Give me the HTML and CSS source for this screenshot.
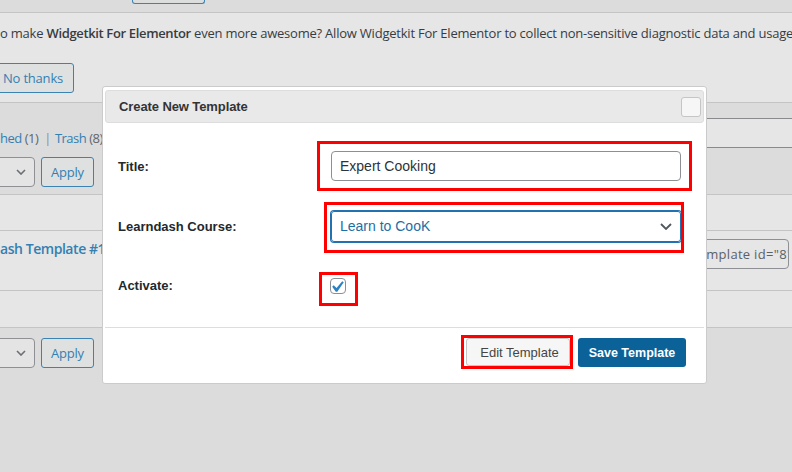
FILE: index.html
```html
<!DOCTYPE html>
<html lang="en">
<head>
<meta charset="utf-8">
<title>Create New Template</title>
<link rel="stylesheet" href="styles.css">
</head>
<body>
<div class="page">
  <div class="topbar"><span class="add-new"></span></div>
  <div class="notice">
    <p class="notice-text">o make <strong>Widgetkit For Elementor</strong> even more awesome? Allow Widgetkit For Elementor to collect non-sensitive diagnostic data and usage information.</p>
    <div class="notice-actions"><span class="btn-sec btn-nothanks">No thanks</span></div>
  </div>
  <div class="filters">
    <div class="subsub"><a class="link">hed</a> <span class="count">(1)</span><span class="sep">|</span><a class="link">Trash</a> <span class="count">(8)</span></div>
    <div class="search-box"></div>
  </div>
  <div class="tablenav">
    <div class="bulk-select">
      <svg class="chev-sm" width="10" height="6" viewBox="0 0 10 6"><polyline points="1,1 5,5 9,1" fill="none" stroke="#6b6f73" stroke-width="1.6"/></svg>
    </div>
    <span class="btn-sec">Apply</span>
  </div>
  <div class="list-table">
    <div class="row row-head"></div>
    <div class="row row-item">
      <a class="row-title">ash Template #1</a>
      <div class="shortcode">[learndash_template id="8"]</div>
    </div>
    <div class="row row-foot"></div>
  </div>
  <div class="tablenav tablenav-bottom">
    <div class="bulk-select">
      <svg class="chev-sm" width="10" height="6" viewBox="0 0 10 6"><polyline points="1,1 5,5 9,1" fill="none" stroke="#6b6f73" stroke-width="1.6"/></svg>
    </div>
    <span class="btn-sec">Apply</span>
  </div>
</div>

<div class="dialog">
  <div class="dialog-title">
    <span class="dialog-title-text">Create New Template</span>
    <span class="dialog-close"></span>
  </div>
  <div class="dialog-body">
    <div class="form-row">
      <label class="form-label">Title:</label>
      <div class="field"><div class="text-input">Expert Cooking</div></div>
    </div>
    <div class="form-row">
      <label class="form-label">Learndash Course:</label>
      <div class="field">
        <div class="select-input">
          <span>Learn to CooK</span>
          <svg width="12" height="7" viewBox="0 0 12 7"><polyline points="1,1 6,6 11,1" fill="none" stroke="#50575e" stroke-width="1.8"/></svg>
        </div>
      </div>
    </div>
    <div class="form-row form-row-check">
      <label class="form-label">Activate:</label>
      <div class="field">
        <span class="checkbox">
          <svg width="12" height="11" viewBox="5.6 4.7 10.8 9.7"><path d="M14.83 4.89l1.34.94-5.81 8.38H9.02L5.78 9.67l1.34-1.25 2.57 2.4z" fill="#2b82c2"/></svg>
        </span>
      </div>
    </div>
  </div>
  <div class="dialog-footer">
    <span class="btn-edit">Edit Template</span>
    <span class="btn-save">Save Template</span>
  </div>
  <span class="anno anno-title"></span>
  <span class="anno anno-course"></span>
  <span class="anno anno-check"></span>
  <span class="anno anno-edit"></span>
</div>
</body>
</html>
```

FILE: styles.css
```css
* { box-sizing: border-box; }
html, body { margin: 0; padding: 0; }
body {
  width: 792px;
  height: 472px;
  overflow: hidden;
  position: relative;
  background: #dcdcdc;
  font-family: "Open Sans", "Noto Sans", sans-serif;
  font-size: 13px;
  color: #373c42;
}

.topbar { height: 12px; }
.add-new {
  display: block;
  margin-left: 132px;
  width: 73px;
  height: 4px;
  border: 1px solid #3a83b2;
  border-top: 0;
  border-radius: 0 0 3px 3px;
  background: #dcdddd;
}

.notice {
  height: 91px;
  background: #e6e6e6;
  border-top: 1px solid #c4c4c4;
  border-bottom: 1px solid #c4c4c4;
  padding-top: 10px;
}
.notice-text {
  margin: 0;
  line-height: 20px;
  white-space: nowrap;
  overflow: hidden;
  letter-spacing: -0.22px;
}
.notice-text strong { font-weight: 600; letter-spacing: -0.35px; }
.notice-actions { margin-top: 20px; }

.btn-sec {
  display: inline-flex;
  align-items: center;
  height: 30px;
  padding: 0 9px;
  border: 1px solid #3a83b2;
  border-radius: 3px;
  color: #3380b2;
  background: #dfe0e0;
  font-size: 13px;
  letter-spacing: -0.2px;
}
.btn-nothanks { margin-left: -8px; padding: 0 10px; }

.filters {
  display: flex;
  justify-content: space-between;
  align-items: flex-start;
  padding-top: 15px;
  height: 45px;
}
.subsub { margin-top: 10px; line-height: 20px; white-space: nowrap; letter-spacing: -0.5px; }
.link { color: #3380b2; }
.count { color: #60666b; }
.sep { color: #8a8e92; margin: 0 4px 0 6px; }
.search-box {
  width: 200px;
  height: 30px;
  margin-right: -10px;
  border: 1px solid #888a8e;
  border-radius: 4px;
  background: #e6e6e6;
}

.tablenav {
  display: flex;
  gap: 6px;
  align-items: center;
  margin-top: 9px;
  height: 30px;
}
.tablenav-bottom { margin-top: 10px; }
.bulk-select {
  width: 55px;
  height: 30px;
  margin-left: -20px;
  border: 1px solid #8e9093;
  border-radius: 4px;
  background: #e4e4e4;
  display: flex;
  align-items: center;
  justify-content: flex-end;
  padding-right: 8px;
}

.list-table { margin-top: 7px; border-bottom: 1px solid #c4c4c4; }
.row { border-top: 1px solid #c4c4c4; background: #e6e6e6; }
.row-head { height: 36px; }
.row-item {
  height: 60px;
  display: flex;
  justify-content: space-between;
  align-items: flex-start;
  padding-top: 8px;
}
.row-foot { height: 37px; }
.row-title {
  font-size: 14px;
  font-weight: 600;
  color: #3380b2;
  line-height: 20px;
  white-space: nowrap;
  letter-spacing: -0.45px;
}
.shortcode {
  width: 176px;
  height: 30px;
  margin-right: 3px;
  border: 1px solid #8e9093;
  border-radius: 4px;
  background: #e6e6e6;
  overflow: hidden;
  white-space: nowrap;
  padding: 0 0 0 6px;
  line-height: 28px;
  color: #5c6166;
  font-size: 13px;
  letter-spacing: 0.3px;
}

/* dialog */
.dialog {
  position: absolute;
  left: 102px;
  top: 86px;
  width: 605px;
  height: 298px;
  background: #fff;
  border: 1px solid #cbcbcb;
  border-radius: 3px;
  padding: 3px 2px 0;
  font-family: "Liberation Sans", Arial, sans-serif;
  color: #222;
}
.dialog-title {
  height: 33px;
  background: #e9e9e9;
  border: 1px solid #dddddd;
  border-radius: 3px;
  display: flex;
  align-items: center;
  justify-content: space-between;
  padding: 0 2px 0 13px;
}
.dialog-title-text { font-weight: bold; font-size: 13px; color: #333; letter-spacing: -0.1px; }
.dialog-close {
  width: 20px;
  height: 20px;
  background: #f6f6f6;
  border: 1px solid #c5c5c5;
  border-radius: 3px;
}
.dialog-body { padding: 13px 0 11px 13px; }
.form-row {
  display: grid;
  grid-template-columns: 213px 350px;
  align-items: center;
  height: 60px;
}
.form-row-check .form-label { margin-top: -2px; }
.form-label { font-weight: bold; font-size: 13px; color: #23282d; }
.field { display: flex; align-items: center; }
.text-input {
  width: 350px;
  height: 30px;
  border: 1px solid #8c8f94;
  border-radius: 4px;
  padding: 0 8px;
  line-height: 28px;
  font-size: 14px;
  color: #2c3338;
}
.select-input {
  width: 351px;
  height: 31px;
  border: 1px solid #2271b1;
  box-shadow: 0 0 0 1px #2271b1;
  border-radius: 3px;
  padding: 0 8px 0 8px;
  display: flex;
  align-items: center;
  justify-content: space-between;
  font-size: 14px;
  color: #1d6ea5;
}
.checkbox {
  width: 16px;
  height: 16px;
  margin-left: -1px;
  border: 1px solid #8c8f94;
  border-radius: 4px;
  display: flex;
  align-items: center;
  justify-content: center;
}
.dialog-footer {
  border-top: 1px solid #dddddd;
  padding: 10px 18px 0 0;
  display: flex;
  justify-content: flex-end;
  align-items: flex-start;
  gap: 8px;
}
.btn-edit {
  width: 104px;
  height: 28px;
  border: 1px solid #c5c5c5;
  border-radius: 3px;
  background: #f6f6f6;
  color: #454545;
  font-size: 13px;
  display: flex;
  align-items: center;
  justify-content: center;
  padding-left: 3px;
}
.btn-save {
  width: 108px;
  height: 29px;
  border-radius: 3px;
  background: #0a6299;
  color: #fff;
  font-weight: bold;
  font-size: 12.5px;
  display: flex;
  align-items: center;
  justify-content: center;
}

/* red annotation boxes drawn over the screenshot */
.anno { position: absolute; border: 3px solid #ff0000; }
.anno-title { left: 214px; top: 54px; width: 375px; height: 50px; }
.anno-course { left: 221px; top: 115px; width: 360px; height: 51px; }
.anno-check { left: 216px; top: 185px; width: 39px; height: 34px; }
.anno-edit { left: 358px; top: 248px; width: 112px; height: 34px; }
```
